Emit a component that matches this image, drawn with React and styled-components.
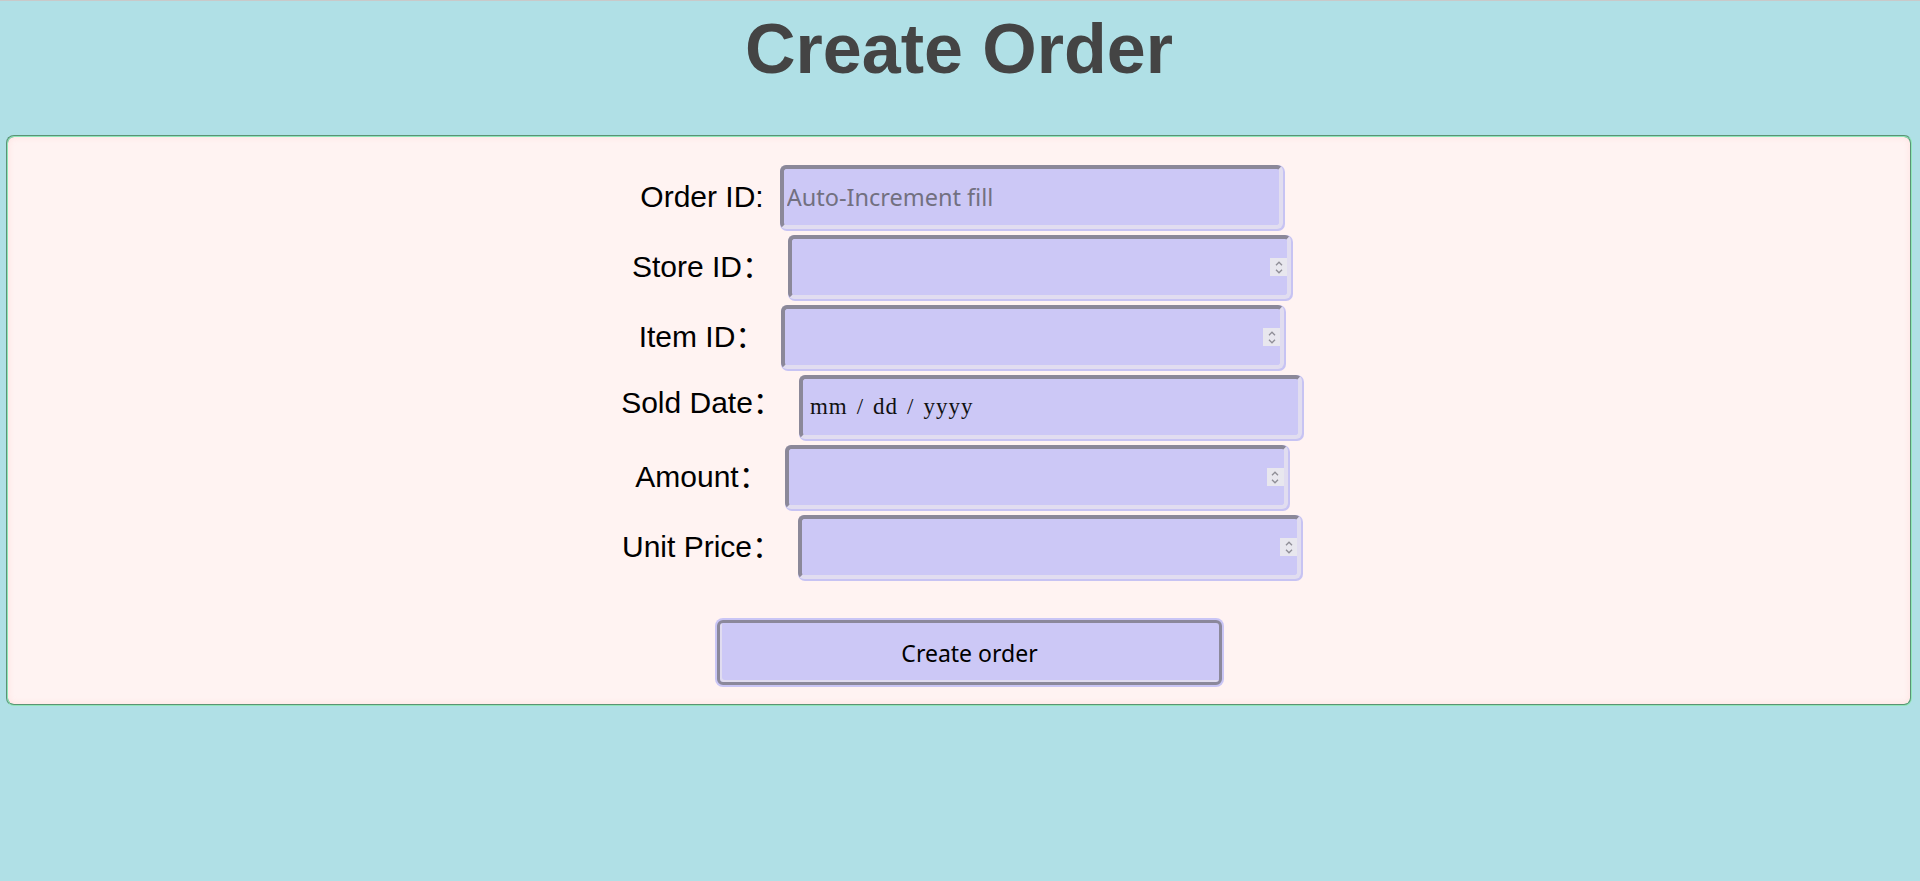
import React from "react";
import styled, { createGlobalStyle, css } from "styled-components";

const GlobalStyle = createGlobalStyle`
  html, body {
    margin: 0;
    padding: 0;
    background: #b0e0e6;
  }
  body {
    font-family: "Liberation Sans", Arial, sans-serif;
  }
  input::-webkit-outer-spin-button,
  input::-webkit-inner-spin-button {
    -webkit-appearance: none;
    margin: 0;
  }
  input[type="number"] {
    -moz-appearance: textfield;
    appearance: textfield;
  }
`;

const Page = styled.div`
  min-height: 100vh;
  box-sizing: border-box;
  border-top: 1px solid #c9c9c9;
  padding: 8px 8px 0 6px;
`;

const Title = styled.h1`
  margin: 0 0 46px;
  text-align: center;
  font: 700 70px/80px "Liberation Sans", Arial, sans-serif;
  color: #444444;
`;

const Panel = styled.form`
  box-sizing: border-box;
  border: 2px groove #8fe6b8;
  border-radius: 8px;
  background: #fff3f2;
  box-shadow: inset 0 0 6px rgba(255, 190, 190, 0.35);
  padding: 28px 0 19px 5px;
  display: flex;
  flex-direction: column;
  align-items: center;
`;

const Row = styled.div`
  display: flex;
  align-items: center;
  justify-content: center;
  gap: 16px;
  margin-bottom: 6px;
`;

const Label = styled.label`
  font-size: 30px;
  line-height: 34px;
  color: #000;
  font-family: "Liberation Sans", "Noto Sans CJK SC", sans-serif;
  white-space: nowrap;
  margin-bottom: ${(p) => (p.$raise ? 8 : 0)}px;
`;

const fieldBase = css`
  box-sizing: border-box;
  width: 503px;
  height: 64px;
  border: 4px solid;
  border-color: #8b8899 #e1ddf0 #e1ddf0 #8b8899;
  border-radius: 6px;
  box-shadow: 1px 1px 0 1px #c7c3f3;
  background: #ccc8f6;
  outline: none;
  margin: 0;
`;

const TextInput = styled.input`
  ${fieldBase}
  padding: 0 3px;
  font: 23.5px "Noto Sans", "Open Sans", sans-serif;
  color: #000;
  &::placeholder {
    color: #727080;
  }
`;

const DateInput = styled.input`
  ${fieldBase}
  padding: 0 6px;
  font: 23px "Liberation Serif", "DejaVu Serif", serif;
  letter-spacing: 1px;
  color: #111;
  &::-webkit-calendar-picker-indicator {
    display: none;
  }
  &::-webkit-datetime-edit-text {
    padding: 0 8px;
    color: #111;
  }
  &::-webkit-datetime-edit-month-field,
  &::-webkit-datetime-edit-day-field,
  &::-webkit-datetime-edit-year-field {
    color: #111;
  }
`;

const FieldWrap = styled.span`
  position: relative;
  display: inline-flex;
`;

const Spinner = styled.span`
  position: absolute;
  right: 4px;
  top: 50%;
  transform: translateY(-50%);
  width: 17px;
  height: 18px;
  background: #e8e7ee;
  display: flex;
  flex-direction: column;
  align-items: center;
  justify-content: center;
  gap: 3px;
  pointer-events: none;
`;

const Chevron = ({ up }) => (
  <svg width="8" height="5" viewBox="0 0 8 5">
    <path
      d={up ? "M1 4.2 L4 1.2 L7 4.2" : "M1 0.8 L4 3.8 L7 0.8"}
      fill="none"
      stroke="#8e8d96"
      strokeWidth="1.3"
    />
  </svg>
);

const NumberField = ({ id }) => (
  <FieldWrap>
    <TextInput id={id} type="number" />
    <Spinner>
      <Chevron up />
      <Chevron />
    </Spinner>
  </FieldWrap>
);

const SubmitButton = styled.button`
  box-sizing: border-box;
  width: 505px;
  height: 65px;
  margin: 35px 0 0 16px;
  border: 3px solid #8b889b;
  border-radius: 6px;
  background: #ccc8f6;
  box-shadow: inset 2px -2px 0 0 #e0dcf0, 0 0 0 2px #c9c5f5;
  font: 23px "Noto Sans", "Open Sans", sans-serif;
  color: #000;
  cursor: pointer;
`;

export default function App() {
  return (
    <>
      <GlobalStyle />
      <Page>
        <Title>Create Order</Title>
        <Panel onSubmit={(e) => e.preventDefault()}>
          <Row>
            <Label htmlFor="orderId">Order ID:</Label>
            <TextInput id="orderId" type="text" placeholder="Auto-Increment fill" />
          </Row>
          <Row>
            <Label htmlFor="storeId">Store ID：</Label>
            <NumberField id="storeId" />
          </Row>
          <Row>
            <Label htmlFor="itemId">Item ID：</Label>
            <NumberField id="itemId" />
          </Row>
          <Row>
            <Label htmlFor="soldDate" $raise>
              Sold Date：
            </Label>
            <DateInput id="soldDate" type="date" />
          </Row>
          <Row>
            <Label htmlFor="amount">Amount：</Label>
            <NumberField id="amount" />
          </Row>
          <Row>
            <Label htmlFor="unitPrice">Unit Price：</Label>
            <NumberField id="unitPrice" />
          </Row>
          <SubmitButton type="submit">Create order</SubmitButton>
        </Panel>
      </Page>
    </>
  );
}
